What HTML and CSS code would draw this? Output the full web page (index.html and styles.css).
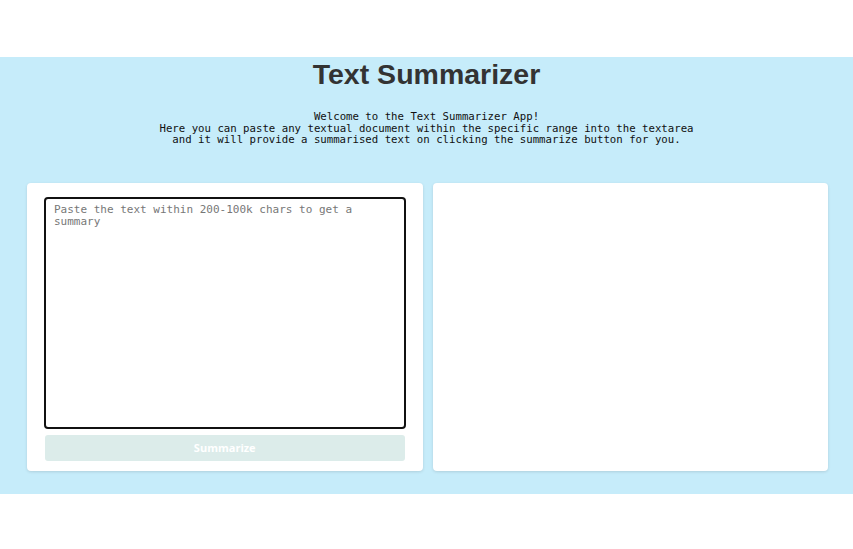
FILE: index.html
```html
<!DOCTYPE html>
<html lang="en">
<head>
<meta charset="utf-8">
<title>Text Summarizer</title>
<link rel="stylesheet" href="styles.css">
</head>
<body>
<div class="topbar"></div>
<main class="app">
  <h1 class="title">Text Summarizer</h1>
  <pre class="intro">Welcome to the Text Summarizer App!
Here you can paste any textual document within the specific range into the textarea
and it will provide a summarised text on clicking the summarize button for you.</pre>
  <div class="panels">
    <section class="card input-card">
      <textarea class="input" placeholder="Paste the text within 200-100k chars to get a summary"></textarea>
      <button class="btn" disabled>Summarize</button>
    </section>
    <section class="card output-card"></section>
  </div>
</main>
</body>
</html>
```
FILE: styles.css
```css
html, body {
  margin: 0;
  padding: 0;
  background: #ffffff;
}
body {
  font-family: "Liberation Sans", Arial, sans-serif;
}
.topbar {
  height: 57px;
}
.app {
  background: #c6ecfa;
  height: 437px;
  box-sizing: border-box;
  padding-top: 2px;
  display: flex;
  flex-direction: column;
  align-items: center;
}
.title {
  margin: 0;
  font-size: 28.5px;
  line-height: 31px;
  font-weight: bold;
  color: #333333;
}
.intro {
  margin: 21px 0 0 0;
  font-family: "DejaVu Sans Mono", "Liberation Mono", monospace;
  font-size: 10.7px;
  line-height: 11.5px;
  color: #111111;
  text-align: center;
}
.panels {
  margin-top: 37px;
  width: 100%;
  box-sizing: border-box;
  padding: 0 25px 0 27px;
  display: grid;
  grid-template-columns: minmax(0, 1fr) minmax(0, 1fr);
  gap: 10px;
}
.card {
  min-width: 0;
  background: #ffffff;
  border-radius: 4px;
  box-shadow: 0 1px 3px rgba(0, 0, 0, 0.12);
  height: 288px;
  box-sizing: border-box;
}
.input-card {
  padding: 14px 17px 10px 17px;
  display: flex;
  flex-direction: column;
  gap: 6px;
}
.input {
  flex: 1;
  resize: none;
  border: 2px solid #111111;
  border-radius: 4px;
  padding: 5px 8px;
  margin: 0;
  font-family: "DejaVu Sans Mono", "Liberation Mono", monospace;
  font-size: 11px;
  line-height: 12px;
  color: #222;
  outline: none;
}
.input::placeholder {
  color: #777777;
}
.btn {
  height: 26px;
  border: none;
  border-radius: 3px;
  background: #dcecea;
  color: #ffffff;
  font-family: "Open Sans", "Liberation Sans", sans-serif;
  font-weight: bold;
  font-size: 11px;
  margin: 0 1px;
}
```
